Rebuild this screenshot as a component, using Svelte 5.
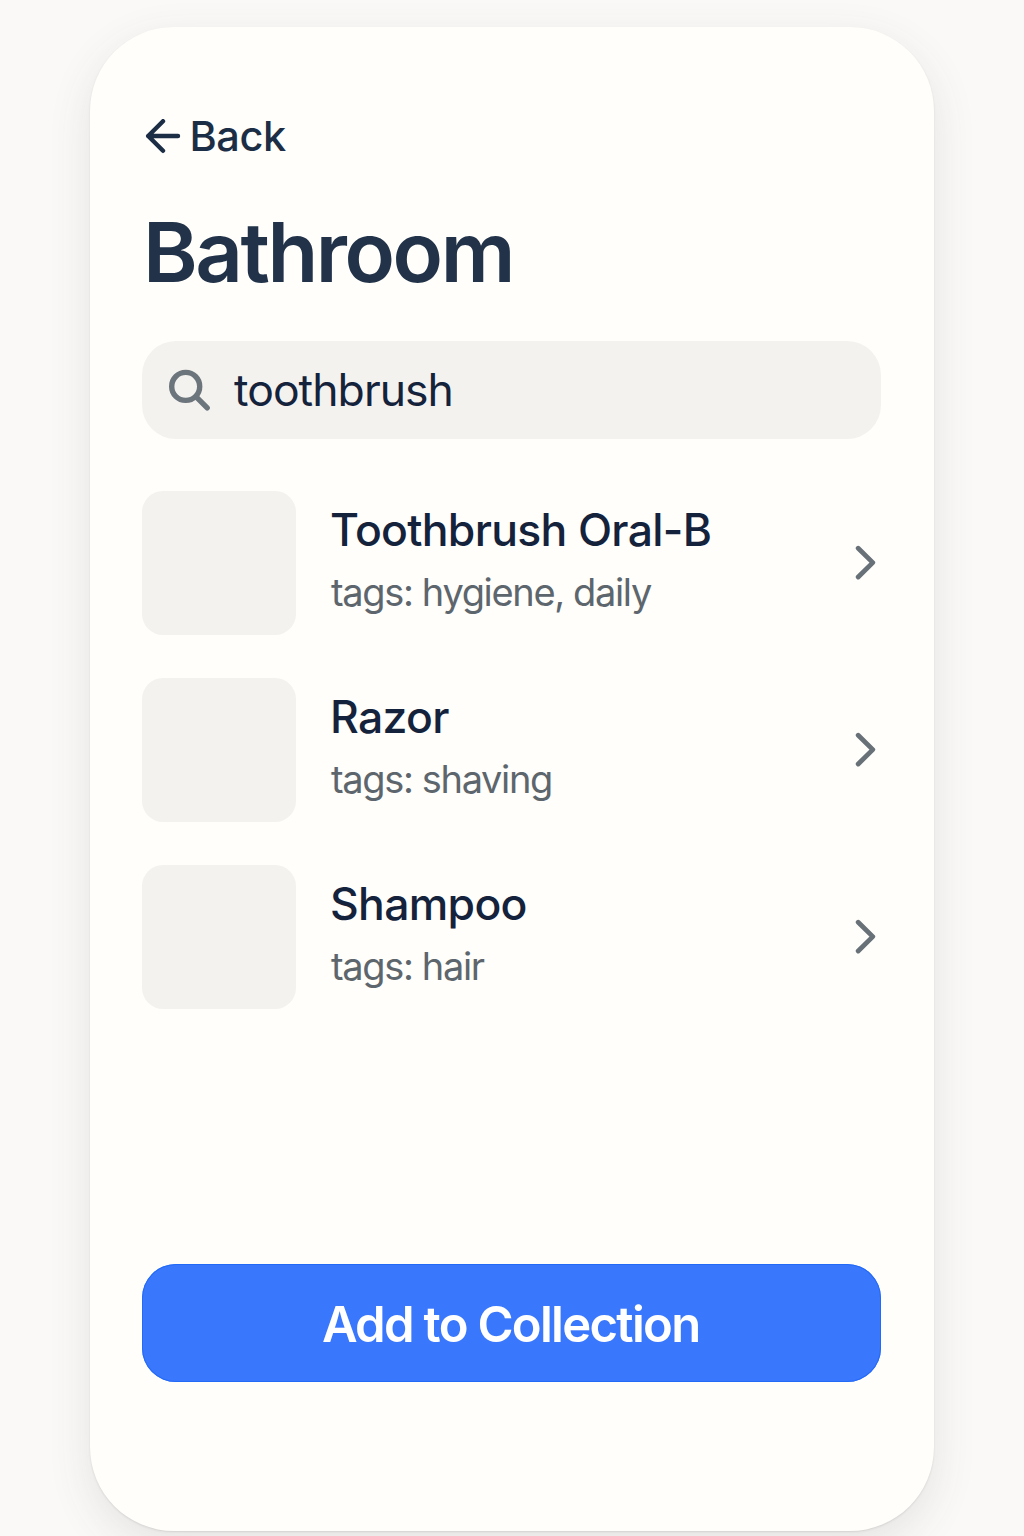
<script>
  let query = $state('toothbrush');

  const items = [
    { name: 'Toothbrush Oral-B', tags: 'hygiene, daily' },
    { name: 'Razor', tags: 'shaving' },
    { name: 'Shampoo', tags: 'hair' }
  ];
</script>

<div class="page">
  <main class="card">
    <button class="back" type="button">
      <svg class="back-icon" viewBox="0 0 36 36" aria-hidden="true">
        <path d="M33 17H3.2M18 2.2L3.2 17l14.8 14.8" />
      </svg>
      <span>Back</span>
    </button>

    <h1>Bathroom</h1>

    <label class="search">
      <svg class="search-icon" viewBox="0 0 44 44" aria-hidden="true">
        <circle cx="17.7" cy="18.4" r="14" />
        <path d="M28.2 28.8L39.2 39.8" />
      </svg>
      <input type="text" aria-label="Search" bind:value={query} />
    </label>

    <ul class="list">
      {#each items as item}
        <li class="item">
          <div class="thumb"></div>
          <div class="info">
            <div class="name">{item.name}</div>
            <div class="tags">tags: {item.tags}</div>
          </div>
          <svg class="chevron" viewBox="0 0 22 36" aria-hidden="true">
            <path d="M3.2 3.2L17.8 17.6L3.2 32" />
          </svg>
        </li>
      {/each}
    </ul>

    <button class="add" type="button">Add to Collection</button>
  </main>
</div>

<style>
  :global(body) {
    margin: 0;
    background: #faf9f7;
  }

  .page {
    box-sizing: border-box;
    height: 1536px;
    padding: 27px 90px 5px;
    overflow: hidden;
    background: #faf9f7;
    font-family: Inter, 'Liberation Sans', sans-serif;
    color: #14233b;
  }

  .card {
    box-sizing: border-box;
    display: flex;
    flex-direction: column;
    height: 1504px;
    padding: 85px 53px 149px 52.4px;
    border-radius: 84px;
    background: #fffefb;
    box-shadow:
      0 1px 2px rgba(60, 60, 60, 0.13),
      0 14px 44px rgba(70, 70, 70, 0.12);
  }

  button {
    border: 0;
    font-family: inherit;
    cursor: pointer;
  }

  .back {
    display: flex;
    align-items: center;
    align-self: flex-start;
    gap: 8.5px;
    height: 50px;
    padding: 0 0 0 2.6px;
    background: none;
    color: #1c2e45;
    font-size: 41.5px;
    font-weight: 500;
    line-height: 50px;
    letter-spacing: -0.4px;
  }

  .back span {
    margin-top: -2px;
  }

  svg {
    flex: none;
    fill: none;
    stroke-linecap: round;
    stroke-linejoin: round;
  }

  .back-icon {
    width: 36px;
    height: 36px;
    stroke: #1c2e45;
    stroke-width: 4.4;
  }

  h1 {
    margin: 40px 0 0 0.6px;
    color: #223349;
    font-size: 83px;
    font-weight: 600;
    line-height: 100px;
    letter-spacing: -2.45px;
  }

  .search {
    box-sizing: border-box;
    display: flex;
    align-items: center;
    gap: 18px;
    height: 98px;
    margin-top: 39px;
    padding: 0 25.6px;
    border-radius: 34px;
    background: #f4f2ee;
  }

  .search-icon {
    width: 44px;
    height: 44px;
    stroke: #6c757c;
    stroke-width: 5.4;
  }

  input {
    flex: 1;
    min-width: 0;
    padding: 0 0 0 4px;
    border: 0;
    outline: 0;
    background: none;
    color: #14233b;
    font: 400 44.5px/60px Inter, 'Liberation Sans', sans-serif;
    letter-spacing: -0.95px;
  }

  .list {
    display: flex;
    flex-direction: column;
    gap: 43px;
    margin: 52px 0 0;
    padding: 0;
    list-style: none;
  }

  .item {
    display: flex;
    align-items: center;
    height: 144px;
  }

  .thumb {
    width: 153.6px;
    height: 144px;
    border-radius: 21px;
    background: #f4f2ee;
  }

  .info {
    flex: 1;
    align-self: flex-start;
    padding: 8px 0 0 35px;
    line-height: 62px;
    white-space: nowrap;
  }

  .name {
    margin-left: -1px;
    font-size: 44.5px;
    font-weight: 500;
    letter-spacing: -0.68px;
  }

  .tags {
    color: #5d666d;
    font-size: 38px;
    letter-spacing: -1.35px;
  }

  .chevron {
    width: 22px;
    height: 36px;
    margin-right: 4px;
    stroke: #687178;
    stroke-width: 4.8;
  }

  .add {
    height: 118px;
    margin-top: auto;
    padding: 2px 2px 0 0;
    border-radius: 34px;
    background: #3977fd;
    box-shadow: inset 0 0 0 1px #236af7;
    color: #fff;
    font-size: 49px;
    font-weight: 570;
    letter-spacing: -1.7px;
  }
</style>
